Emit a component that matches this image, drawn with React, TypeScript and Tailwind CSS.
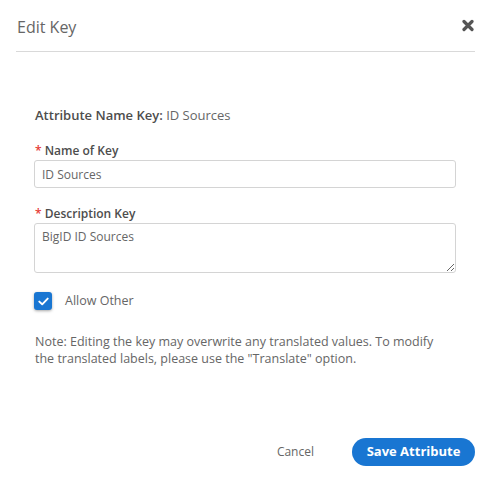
export default function App() {
  return (
    <div
      className="w-[491px] h-[483px] bg-white text-[#666] flex flex-col"
      style={{ fontFamily: '"Open Sans", "Liberation Sans", sans-serif' }}
    >
      {/* Header */}
      <div className="mx-4 h-[52px] border-b border-[#d9d9d9] flex items-center justify-between">
        <h2 className="text-[16px] text-[#666] pl-px pt-[2px]">Edit Key</h2>
        <button className="mr-[1px] text-[#555]" aria-label="Close">
          <svg width="12" height="13" viewBox="0 0 12 12">
            <path
              d="M2 2 L10 10 M10 2 L2 10"
              stroke="currentColor"
              strokeWidth="3.2"
              strokeLinecap="round"
            />
          </svg>
        </button>
      </div>

      {/* Body */}
      <div className="px-[34px] pt-[54px] flex flex-col">
        <p className="text-[13px] leading-[18px] pl-px">
          <span className="font-semibold text-[#4d4d4d]">Attribute Name Key:</span> ID Sources
        </p>

        <label className="mt-[19px] text-[12px] leading-[16px] font-semibold text-[#4d4d4d] pl-px">
          <span className="text-[#e53935]">*</span> Name of Key
        </label>
        <input
          className="mt-[1px] w-[422px] h-[28px] border border-[#d4d4d4] rounded-[3px] px-[7px] text-[12px] text-[#666] outline-none"
          defaultValue="ID Sources"
        />

        <label className="mt-[18px] text-[12px] leading-[16px] font-semibold text-[#4d4d4d] pl-px">
          <span className="text-[#e53935]">*</span> Description Key
        </label>
        <textarea
          className="mt-[1px] w-[422px] h-[50px] border border-[#d4d4d4] rounded-[3px] px-[7px] py-[5px] text-[12px] leading-[16px] text-[#666] outline-none"
          defaultValue="BigID ID Sources"
        />

        <div className="mt-[19px] flex items-center gap-[13px]">
          <span className="w-[18px] h-[18px] rounded-[3px] bg-[#1976d2] shadow-[0_1px_3px_rgba(0,0,0,0.35)] flex items-center justify-center">
            <svg width="11" height="9" viewBox="0 0 11 9">
              <path
                d="M1.3 4.6 L4.2 7.3 L9.7 1.6"
                fill="none"
                stroke="white"
                strokeWidth="1.9"
                strokeLinecap="round"
                strokeLinejoin="round"
              />
            </svg>
          </span>
          <span className="text-[12.5px] text-[#666]">Allow Other</span>
        </div>

        <p className="mt-[22px] text-[12.5px] leading-[17px] text-[#666] pl-px w-[415px]">
          Note: Editing the key may overwrite any translated values. To modify the translated labels,
          please use the "Translate" option.
        </p>
      </div>

      {/* Footer */}
      <div className="mt-auto mb-[17px] mr-[16px] flex items-center justify-end gap-[38px]">
        <button className="text-[12px] text-[#666]">Cancel</button>
        <button className="w-[123px] h-[28px] rounded-full bg-[#1976d2] text-white text-[13px] font-bold">
          Save Attribute
        </button>
      </div>
    </div>
  );
}
